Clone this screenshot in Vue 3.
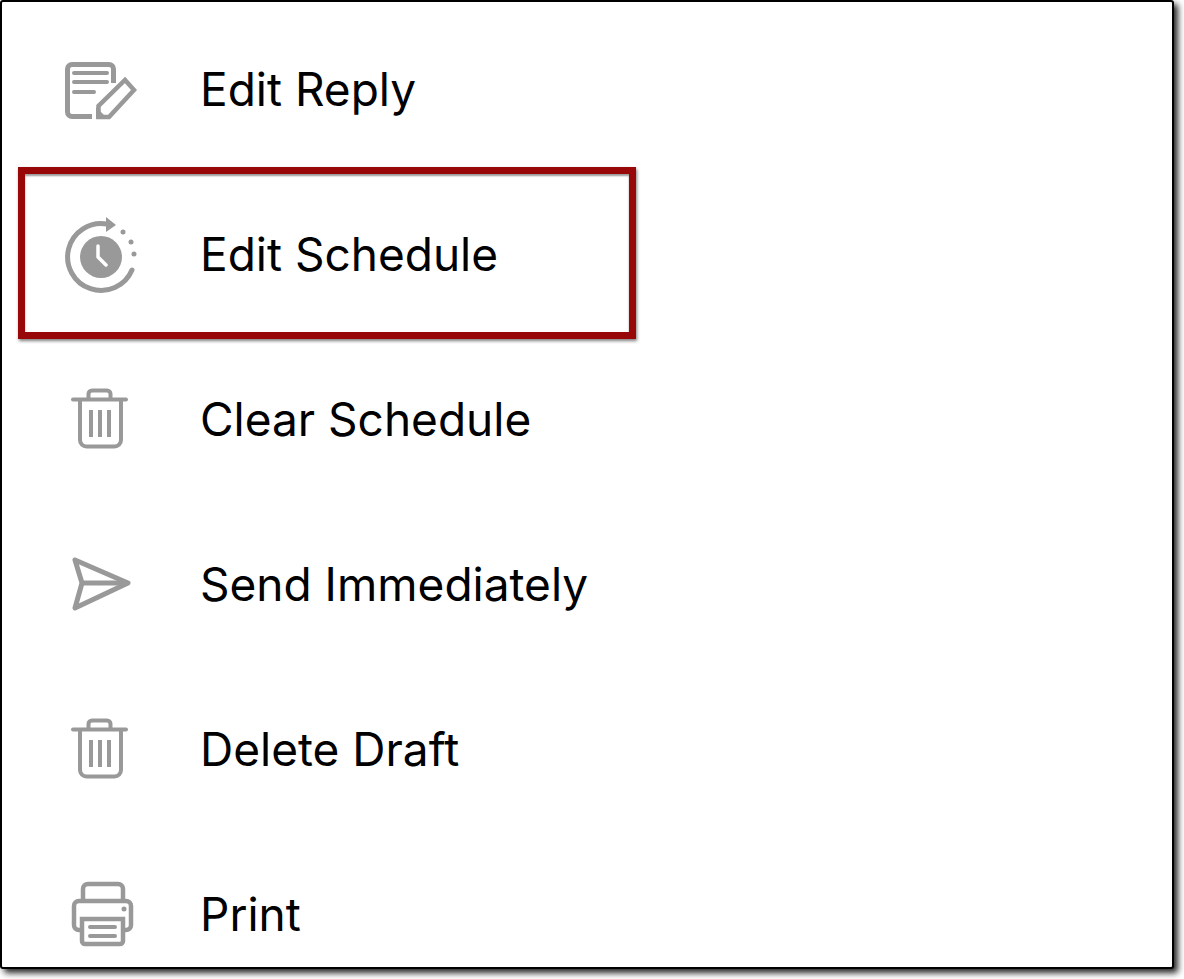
<template>
  <div class="page">
    <div class="frame">
      <ul class="menu">
        <li v-for="item in items" :key="item.label" class="menu-row">
          <svg class="icon" width="80" height="80" viewBox="0 0 80 80" fill="none" aria-hidden="true">
            <template v-if="item.icon === 'edit'">
              <path d="M53.500 33V19a4.500 4.500 0 0 0-4.500-4.500H12a4.500 4.500 0 0 0-4.500 4.500v43a4.500 4.500 0 0 0 4.500 4.500h20" stroke-width="5" />
              <path d="M14 23h33M14 32h33M14 42h20" stroke-width="4" stroke-linecap="round" />
              <path d="M38.500 67V56L65 30l9 10-25 27z" stroke-width="4.500" />
              <path d="M36 69V57l12 12z" class="solid" />
            </template>
            <template v-else-if="item.icon === 'schedule'">
              <path d="M72 55A33.500 33.500 0 1 1 47 9" stroke-width="5" stroke-linecap="round" />
              <path d="M46 2l10 8-10 7z" class="solid" />
              <circle cx="41" cy="42" r="21" class="solid" />
              <path d="M38 31v11l8 8" stroke="#fff" stroke-width="3.500" stroke-linecap="round" stroke-linejoin="round" />
              <circle cx="63" cy="17" r="2.500" class="solid" />
              <circle cx="71" cy="27" r="2.500" class="solid" />
              <circle cx="74" cy="39" r="2.500" class="solid" />
            </template>
            <template v-else-if="item.icon === 'trash'">
              <path d="M28.500 18v-4a3.500 3.500 0 0 1 3.500-3.500h15a3.500 3.500 0 0 1 3.500 3.500v4" stroke-width="4" />
              <path d="M13 19.500h53" stroke-width="4" stroke-linecap="round" />
              <path d="M20 20v40a6.500 6.500 0 0 0 6.500 6.500h28a6.500 6.500 0 0 0 6.500-6.500V20" stroke-width="4" />
              <path d="M31 30v27M40 30v27M49 30v27" stroke-width="4" />
            </template>
            <template v-else-if="item.icon === 'send'">
              <path d="M15 15l53 23-53 25 7-25z" stroke-width="5" stroke-linejoin="round" />
              <path d="M22 38h46" stroke-width="5" />
            </template>
            <template v-else>
              <path d="M23 25V14a5 5 0 0 1 5-5h30a5 5 0 0 1 5 5v11" stroke-width="4.500" />
              <path d="M21 55h-2a5 5 0 0 1-5-5V31a5 5 0 0 1 5-5h47a5 5 0 0 1 5 5v19a5 5 0 0 1-5 5h-2" stroke-width="4.500" />
              <path d="M22 44h41v22a3 3 0 0 1-3 3H25a3 3 0 0 1-3-3z" stroke-width="4.500" />
              <path d="M30 52h25M30 61h25" stroke-width="4" stroke-linecap="round" />
              <circle cx="64" cy="34" r="2.500" class="solid" />
            </template>
          </svg>
          <span class="label">{{ item.label }}</span>
          <div v-if="item.highlighted" class="highlight"></div>
        </li>
      </ul>
    </div>
  </div>
</template>

<script setup>
const items = [
  { label: 'Edit Reply', icon: 'edit' },
  { label: 'Edit Schedule', icon: 'schedule', highlighted: true },
  { label: 'Clear Schedule', icon: 'trash' },
  { label: 'Send Immediately', icon: 'send' },
  { label: 'Delete Draft', icon: 'trash' },
  { label: 'Print', icon: 'print' },
]
</script>

<style>
html,
body {
  margin: 0;
  background: #fff;
}
</style>

<style scoped>
.page {
  height: 979px;
}
.frame {
  box-sizing: border-box;
  width: 1174px;
  height: 969px;
  border: 2px solid #000;
  border-radius: 3px;
  background: #fff;
  box-shadow: 4px 4px 6px rgba(0, 0, 0, 0.85);
  overflow: hidden;
  font-family: Inter, "Liberation Sans", sans-serif;
}
.menu {
  list-style: none;
  margin: 0;
  padding: 5px 0 0;
}
.menu-row {
  position: relative;
  display: flex;
  align-items: center;
  gap: 60px;
  height: 165px;
  padding-left: 58px;
}
.icon {
  flex: none;
  stroke: #999;
}
.solid {
  fill: #999;
  stroke: none;
}
.label {
  font-size: 46px;
  color: #000;
  white-space: nowrap;
  position: relative;
  top: -1px;
}
.highlight {
  position: absolute;
  left: 16px;
  top: -5px;
  width: 618px;
  height: 172px;
  box-sizing: border-box;
  border: 7px solid #980808;
  box-shadow: 1px 2px 3px rgba(0, 0, 0, 0.5), inset 0 2px 2px rgba(0, 0, 0, 0.4);
}
</style>
